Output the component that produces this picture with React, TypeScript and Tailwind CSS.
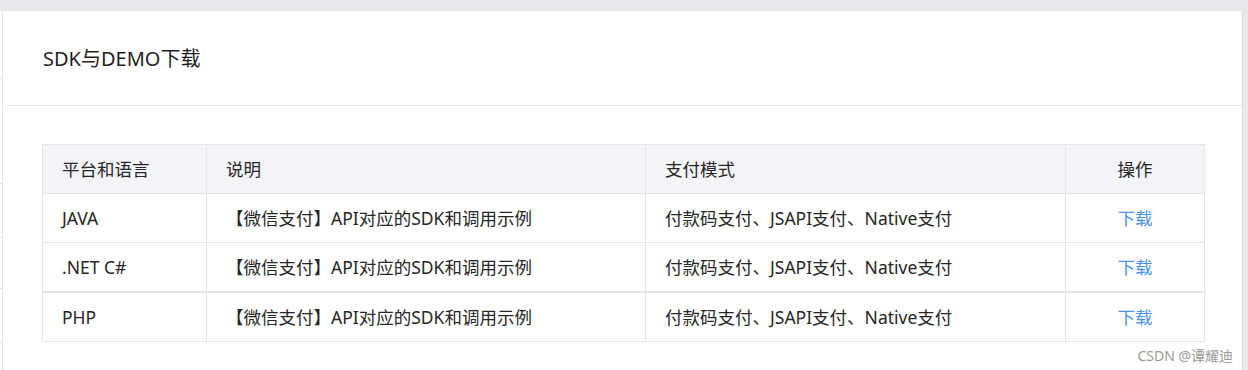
import React from 'react';

const rows = [
  { platform: 'JAVA', desc: '【微信支付】API对应的SDK和调用示例', mode: '付款码支付、JSAPI支付、Native支付' },
  { platform: '.NET C#', desc: '【微信支付】API对应的SDK和调用示例', mode: '付款码支付、JSAPI支付、Native支付' },
  { platform: 'PHP', desc: '【微信支付】API对应的SDK和调用示例', mode: '付款码支付、JSAPI支付、Native支付' },
];

const font = { fontFamily: '"Noto Sans", "Noto Sans CJK SC", sans-serif' };

export default function App() {
  return (
    <div className="w-[1248px] h-[370px] overflow-hidden bg-[#e8e9ed] text-[#262626]" style={font}>
      <div className="h-[11px]" />
      <div className="flex h-[359px]">
        {/* left rail */}
        <div className="w-[3px] bg-white border-r border-[#e2e3e7] flex flex-col">
          <div className="h-[67px]" />
          <div className="h-px w-[2px] bg-[#e2e3e7]" />
          <div className="h-[104px]" />
          <div className="h-px w-[2px] bg-[#e2e3e7]" />
          <div className="h-[53px]" />
          <div className="h-px w-[2px] bg-[#e2e3e7]" />
          <div className="h-[50px]" />
          <div className="h-px w-[2px] bg-[#e2e3e7]" />
          <div className="h-[53px]" />
          <div className="h-px w-[2px] bg-[#e2e3e7]" />
        </div>

        {/* card */}
        <div className="w-[1240px] bg-white border-r border-[#d9dadf] relative">
          <div className="h-[95px] flex items-center pl-[38px] pt-[2px] ml-[2px] border-b border-[#e6e7eb]">
            <h2 className="text-[20px] text-[#1f1f1f]">SDK与DEMO下载</h2>
          </div>

          <div className="pl-[39px] pt-[38px]">
            <table className="w-[1162px] border-collapse text-[17.5px] table-fixed">
              <colgroup>
                <col className="w-[164px]" />
                <col className="w-[439px]" />
                <col className="w-[420px]" />
                <col className="w-[139px]" />
              </colgroup>
              <thead>
                <tr className="h-[49px] bg-[#f3f4f8]">
                  <th className="border border-[#e4e5ea] font-normal text-left pl-[19px]">平台和语言</th>
                  <th className="border border-[#e4e5ea] font-normal text-left pl-[19px]">说明</th>
                  <th className="border border-[#e4e5ea] font-normal text-left pl-[19px]">支付模式</th>
                  <th className="border border-[#e4e5ea] font-normal text-center">操作</th>
                </tr>
              </thead>
              <tbody>
                {rows.map((r, i) => (
                  <tr key={r.platform} className={i === 2 ? 'h-[50px] border-t-2 border-[#e4e5ea]' : 'h-[49px]'}>
                    <td className="border border-[#e4e5ea] pl-[19px]">{r.platform}</td>
                    <td className="border border-[#e4e5ea] pl-[19px]">{r.desc}</td>
                    <td className="border border-[#e4e5ea] pl-[19px]">{r.mode}</td>
                    <td className="border border-[#e4e5ea] text-center">
                      <a className="text-[#4b93e6] cursor-pointer">下载</a>
                    </td>
                  </tr>
                ))}
              </tbody>
            </table>
          </div>

          <div className="absolute right-[9px] bottom-[4px] text-[14px] text-[#9a9a9a]">CSDN @谭耀迪</div>
        </div>
      </div>
    </div>
  );
}
